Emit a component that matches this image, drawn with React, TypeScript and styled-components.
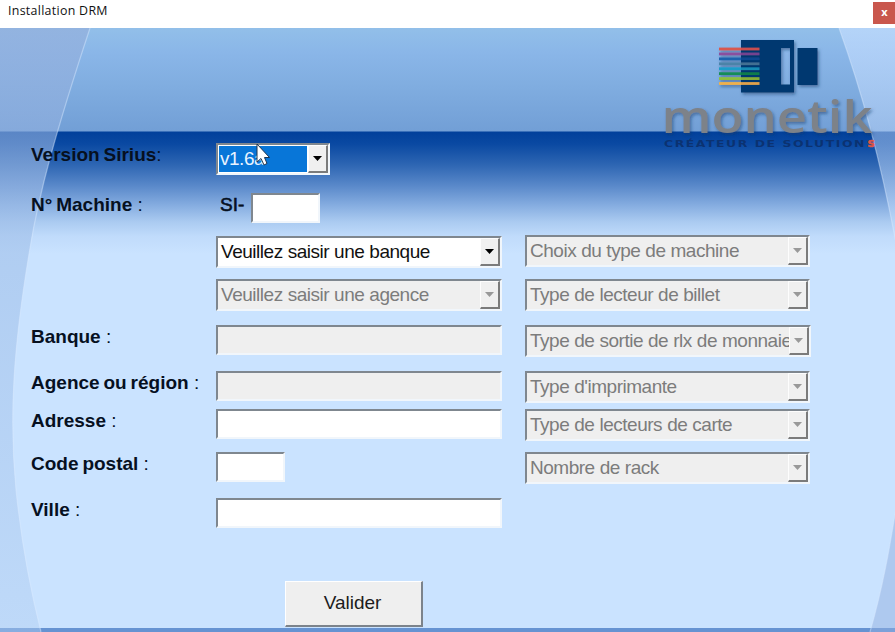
import React from "react";
import styled, { createGlobalStyle, css } from "styled-components";

const GlobalStyle = createGlobalStyle`
  * { box-sizing: border-box; }
  body {
    margin: 0;
    overflow: hidden;
    font-family: "Liberation Sans", Arial, sans-serif;
  }
`;

const Window = styled.div`
  width: 895px;
  height: 632px;
  display: flex;
  flex-direction: column;
  background: #fff;
`;

const TitleBar = styled.header`
  height: 28px;
  flex: none;
  display: flex;
  justify-content: space-between;
  align-items: flex-start;
  padding-left: 8px;
`;

const Title = styled.h1`
  margin: 0;
  font: 400 12.4px/22px "Open Sans", "Noto Sans", sans-serif;
  letter-spacing: 0.3px;
  color: #111;
`;

const CloseButton = styled.button`
  width: 22px;
  height: 22px;
  margin-top: 2px;
  padding: 0 0 2px 1px;
  border: 0;
  background: #c9574d;
  color: #fff;
  font: 700 11px/20px "Open Sans", sans-serif;
`;

const Client = styled.main`
  position: relative;
  flex: 1;
  overflow: hidden;
  background:
    linear-gradient(#6693d2, #6693d2) 0 100% / 100% 4px no-repeat,
    linear-gradient(
      #92bfe9 0px, #8ab6e8 25px, #80ade0 58px, #729fd6 103px,
      #01409b 104px, #0a49a2 116px, #2e66b3 137px, #5a89ca 158px,
      #87aee1 178px, #abcbf1 194px, #c0dbfb 208px, #cae3ff 226px, #cae3ff 100%
    );
`;

const Backdrop = styled.svg`
  position: absolute;
  inset: 0;
`;

const Logo = styled.svg`
  position: absolute;
  left: 655px;
  top: 2px;
  overflow: visible;
`;

const Form = styled.form`
  position: relative;
  display: grid;
  grid-template-columns: 185px 309px 285px;
  grid-template-rows: 50px 42px 44px 46px 46px 38px 43px 46px 83px 46px;
  padding: 115px 0 0 31px;
  align-items: start;
  font-size: 19px;
`;

const Label = styled.label`
  grid-column: 1;
  font-weight: 700;
  line-height: 23px;
  letter-spacing: 0;
  word-spacing: -1.4px;
  white-space: pre;
  color: #06101f;
`;

const Colon = styled.span`
  font-weight: 400;
  word-spacing: 0;
`;

const Prefixed = styled.div`
  grid-column: 2;
  display: flex;
  gap: 6px;
`;

const Prefix = styled.span`
  width: 29px;
  padding-left: 4px;
  line-height: 23px;
  font-size: 19px;
  white-space: nowrap;
  color: #06101f;
  -webkit-text-stroke: 0.6px #06101f;
`;

const sunken = css`
  border-style: solid;
  border-width: 2px;
  border-color: #7f878f #f1f6fb #f1f6fb #7f878f;
`;

const Field = styled.input<{ $w?: number }>`
  ${sunken}
  grid-column: 2;
  width: ${(p) => p.$w ?? 286}px;
  height: 30px;
  padding: 0 3px;
  border-radius: 0;
  background: #fff;
  &:disabled { background: #efefef; }
`;

const ComboBox = styled.div<{ $col: number; $w?: number; $disabled?: boolean }>`
  ${sunken}
  grid-column: ${(p) => p.$col};
  width: ${(p) => p.$w ?? 286}px;
  height: 32px;
  display: flex;
  background: ${(p) => (p.$disabled ? "#efefef" : "#fff")};
  color: ${(p) => (p.$disabled ? "#7c7c7c" : "#111")};
`;

const Value = styled.span<{ $selected?: boolean }>`
  flex: 1;
  min-width: 0;
  padding-left: 3px;
  line-height: 28px;
  letter-spacing: -0.48px;
  word-spacing: 0.2px;
  white-space: nowrap;
  ${(p) =>
    p.$selected &&
    css`
      margin: 1px;
      padding-left: 1px;
      line-height: 25px;
      background: #0876d8;
      color: #e8f3ff;
    `}
`;

const DropButton = styled.span`
  width: 20px;
  height: 28px;
  flex: none;
  display: grid;
  place-items: center;
  border-style: solid;
  border-width: 1px 2px 2px 1px;
  border-color: #fdfdfd #7b7b7b #7b7b7b #fdfdfd;
  background: #f0f0f0;
`;

const Submit = styled.button`
  grid-column: 2;
  grid-row: 10;
  width: 138px;
  height: 46px;
  margin-left: 69px;
  padding: 0 2px 2px 0;
  border-style: solid;
  border-width: 1px 2px 2px 1px;
  border-color: #fff #7c838b #7c838b #fff;
  background: #efefef;
  color: #1c1c1c;
  font: 400 19px/22px "Liberation Sans", Arial, sans-serif;
`;

const Pointer = styled.svg`
  position: absolute;
  left: 255px;
  top: 115px;
`;

type ComboProps = { text: string; row: number; col: number; w?: number; disabled?: boolean; selected?: boolean };

const Row = styled.div<{ $row: number; $col: number; $shift?: number }>`
  grid-row: ${(p) => p.$row};
  grid-column: ${(p) => p.$col};
  display: flex;
  padding-top: ${(p) => p.$shift ?? 0}px;
`;

function Combo({ text, row, col, w, disabled, selected }: ComboProps) {
  return (
    <Row $row={row} $col={col} $shift={col === 2 && row === 3 ? 1 : 0}>
      <ComboBox $col={col} $w={w} $disabled={disabled}>
        <Value $selected={selected}>{text}</Value>
        <DropButton>
          <svg width="9" height="5" viewBox="0 0 9 5">
            <path d="M0 0H9L4.5 5Z" fill={disabled ? "#999" : "#000"} />
          </svg>
        </DropButton>
      </ComboBox>
    </Row>
  );
}

const labels = [
  { row: 1, text: "Version Sirius", colon: ":" },
  { row: 2, text: "N° Machine", colon: " :" },
  { row: 5, text: "Banque", colon: " :" },
  { row: 6, text: "Agence ou région", colon: " :" },
  { row: 7, text: "Adresse", colon: " :" },
  { row: 8, text: "Code postal", colon: " :" },
  { row: 9, text: "Ville", colon: " :" },
];

const machineOptions = [
  "Choix du type de machine",
  "Type de lecteur de billet",
  "Type de sortie de rlx de monnaie",
  "Type d'imprimante",
  "Type de lecteurs de carte",
  "Nombre de rack",
];

const stripes = ["#d9594f", "#8a4f9e", "#1d62ad", "#4c83a8", "#1e9cc8", "#148c58", "#8fbe3c", "#efb04c"];
const stripesOnBlock = ["#c84d50", "#75438f", "#0d468f", "#426f92", "#188bb4", "#087c4c", "#86ad38", "#dfa14b"];

const leftCurve = "M90 0C56 103 39 165 30 220C13 320 9 390 16 462C22 520 31 564 41 604";
const rightCurve = "M839 0C864 69 882 140 896 215";
const lowerCurve = "M897 474C890 518 883 559 870 604";

function MonetikLogo() {
  return (
    <Logo width="240" height="130" viewBox="0 30 240 130">
      <defs>
        <filter id="shade" x="-10%" y="-10%" width="125%" height="130%">
          <feDropShadow dx="1.5" dy="2" stdDeviation="1.5" floodColor="#123766" floodOpacity="0.5" />
        </filter>
      </defs>
      <g filter="url(#shade)">
        <path fillRule="evenodd" fill="#05386f" d="M86 40H139V92.500H86ZM126 48V84.500H135V48Z" />
        <rect x="142.500" y="48" width="20" height="37" fill="#05386f" />
        {stripes.map((color, i) => (
          <React.Fragment key={color}>
            <rect x="64" y={47.6 + i * 4.93} width="22" height="2.800" fill={color} />
            <rect x="86" y={47.6 + i * 4.93} width="18.500" height="2.800" fill={stripesOnBlock[i]} />
          </React.Fragment>
        ))}
      </g>
      <g filter="url(#shade)">
        <text x="6.500" y="133" textLength="211" lengthAdjust="spacingAndGlyphs" fontFamily="Open Sans, sans-serif" fontWeight="600" fontSize="45" fill="#7d8289">
          monetik
        </text>
      </g>
      <text x="9" y="147" textLength="202" lengthAdjust="spacingAndGlyphs" fontFamily="DejaVu Sans, sans-serif" fontWeight="700" fontSize="8" letterSpacing="1" fill="#0b3271">
        CRÉATEUR DE SOLUTION
      </text>
      <text x="212.500" y="147" textLength="7.500" lengthAdjust="spacingAndGlyphs" fontFamily="DejaVu Sans, sans-serif" fontWeight="700" fontSize="8.500" fill="#df5547" stroke="#df5547" strokeWidth="0.5">
        S
      </text>
    </Logo>
  );
}

export default function App() {
  return (
    <Window>
      <GlobalStyle />
      <TitleBar>
        <Title>Installation DRM</Title>
        <CloseButton aria-label="Fermer">x</CloseButton>
      </TitleBar>
      <Client>
        <Backdrop width="895" height="604" viewBox="0 0 895 604">
          <defs>
            <linearGradient id="side" x1="0" y1="0" x2="0" y2="604" gradientUnits="userSpaceOnUse">
              <stop offset="0" stopColor="#93b0dd" stopOpacity="0.75" />
              <stop offset="0.17" stopColor="#91b0df" stopOpacity="0.62" />
              <stop offset="0.36" stopColor="#a5c4ec" stopOpacity="0.7" />
              <stop offset="0.7" stopColor="#a5c4ec" stopOpacity="0.5" />
              <stop offset="1" stopColor="#b0cdf1" stopOpacity="0.45" />
            </linearGradient>
            <linearGradient id="edge" x1="0" y1="0" x2="0" y2="220" gradientUnits="userSpaceOnUse">
              <stop offset="0" stopColor="#c3ddff" stopOpacity="0.7" />
              <stop offset="0.5" stopColor="#bcd6fa" stopOpacity="0.5" />
              <stop offset="1" stopColor="#cae3ff" stopOpacity="0.5" />
            </linearGradient>
          </defs>
          <path d={`${leftCurve}H0V0Z`} fill="url(#side)" />
          <path d={`${rightCurve}V0Z`} fill="url(#edge)" />
          <path d={`${lowerCurve}H897Z`} fill="#91afe0" fillOpacity="0.5" />
          <g fill="none" stroke="#dcecff" strokeOpacity="0.45" strokeWidth="1.2">
            <path d={leftCurve} />
            <path d={rightCurve} />
            <path d={lowerCurve} />
          </g>
        </Backdrop>
        <MonetikLogo />
        <Form onSubmit={(e) => e.preventDefault()}>
          {labels.map((l) => (
            <Row key={l.row} $row={l.row} $col={1}>
              <Label>
                {l.text}
                <Colon>{l.colon}</Colon>
              </Label>
            </Row>
          ))}
          <Combo row={1} col={2} w={114} text="v1.6a" selected />
          <Row $row={2} $col={2}>
            <Prefixed>
              <Prefix>SI-</Prefix>
              <Field $w={69} />
            </Prefixed>
          </Row>
          <Combo row={3} col={2} text="Veuillez saisir une banque" />
          <Combo row={4} col={2} text="Veuillez saisir une agence" disabled />
          <Row $row={5} $col={2}><Field disabled /></Row>
          <Row $row={6} $col={2}><Field disabled /></Row>
          <Row $row={7} $col={2}><Field /></Row>
          <Row $row={8} $col={2}><Field $w={69} /></Row>
          <Row $row={9} $col={2}><Field /></Row>
          {machineOptions.map((text, i) => (
            <Combo key={text} row={i + 3} col={3} text={text} disabled />
          ))}
          <Submit type="submit">Valider</Submit>
        </Form>
        <Pointer width="17" height="25" viewBox="0 0 17 25">
          <path d="M2 1V19L6 15.500L9 22L12 20.500L9.500 14.500H14.500Z" fill="#fff" stroke="#20354f" strokeWidth="1" />
        </Pointer>
      </Client>
    </Window>
  );
}
